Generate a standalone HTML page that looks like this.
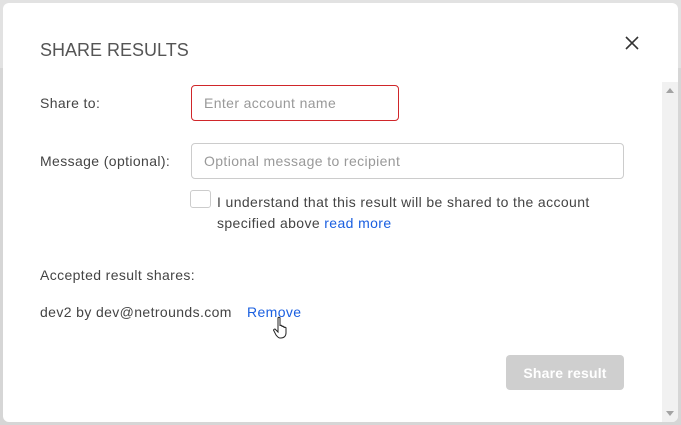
<!DOCTYPE html>
<html><head><style>
*{box-sizing:border-box;margin:0;padding:0}
body{width:681px;height:425px;background:#d6d6d6;font-family:"Liberation Sans",sans-serif;color:#444;position:relative;overflow:hidden;font-size:14px;letter-spacing:0.38px}
.bgbar{position:absolute;left:0;top:0;width:681px;height:68px;background:#e2e2e2}
.modal{position:absolute;left:3px;top:3px;width:675px;height:419px;background:#fff;border-radius:6px;overflow:hidden}
.sb{position:absolute;left:659px;top:79px;width:16px;height:340px;background:#f1f1f1}
.sb .up{position:absolute;left:4px;top:6px;width:0;height:0;border-left:4px solid transparent;border-right:4px solid transparent;border-bottom:5px solid #a3a3a3}
.sb .dn{position:absolute;left:4px;bottom:6px;width:0;height:0;border-left:4px solid transparent;border-right:4px solid transparent;border-top:5px solid #a3a3a3}
.t{position:absolute;white-space:nowrap}
h1{position:absolute;left:37px;top:37px;font-size:18px;font-weight:normal;color:#555;letter-spacing:0}
.inp{position:absolute;border:1px solid #ccc;border-radius:4px;padding-left:12px;color:#999;font-size:14px;display:flex;align-items:center}
.lnk{color:#1a5fe0}
.btn{position:absolute;left:503px;top:352px;width:118px;height:35px;background:#cfcfcf;border-radius:4px;color:#fff;font-weight:bold;font-size:14px;display:flex;align-items:center;justify-content:center;letter-spacing:0.2px}
</style></head><body>
<div class="bgbar"></div>
<div class="modal">
<h1>SHARE RESULTS</h1>
<svg style="position:absolute;left:622px;top:33px" width="14" height="14"><path d="M1 1L13 13M13 1L1 13" stroke="#333" stroke-width="1.6"/></svg>
<div class="sb"><div class="up"></div><div class="dn"></div></div>
<div class="t" style="left:37px;top:92px">Share to:</div>
<div class="inp" style="left:188px;top:82px;width:208px;height:36px;border-color:#d0262a">Enter account name</div>
<div class="t" style="left:37px;top:150px">Message (optional):</div>
<div class="inp" style="left:188px;top:140px;width:433px;height:36px">Optional message to recipient</div>
<div style="position:absolute;left:187px;top:187px;width:21px;height:18px;border:1px solid #ccc;border-radius:3px"></div>
<div class="t" style="left:214px;top:189px;line-height:21px;color:#444">I understand that this result will be shared to the account<br>specified above <span class="lnk">read more</span></div>
<div class="t" style="left:37px;top:264px">Accepted result shares:</div>
<div class="t" style="left:37px;top:301px">dev2 by dev@netrounds.com</div>
<div class="t lnk" style="left:244px;top:301px">Remove</div>
<svg style="position:absolute;left:270px;top:313px" width="18" height="24" viewBox="0 0 18 24"><path d="M5 2c0-1 2-1 2 0v8c0-1 2-1 2 0v1c0-1 2-1 2 0v1c0-1 2-1 2 0v5c0 3-2 5-5 5H7c-2 0-3-2-4-3L1 15c-1-1 0-2 1-2l3 3z" fill="#fff" stroke="#222" stroke-width="1"/></svg>
<div class="btn">Share result</div>
</div>
</body></html>
